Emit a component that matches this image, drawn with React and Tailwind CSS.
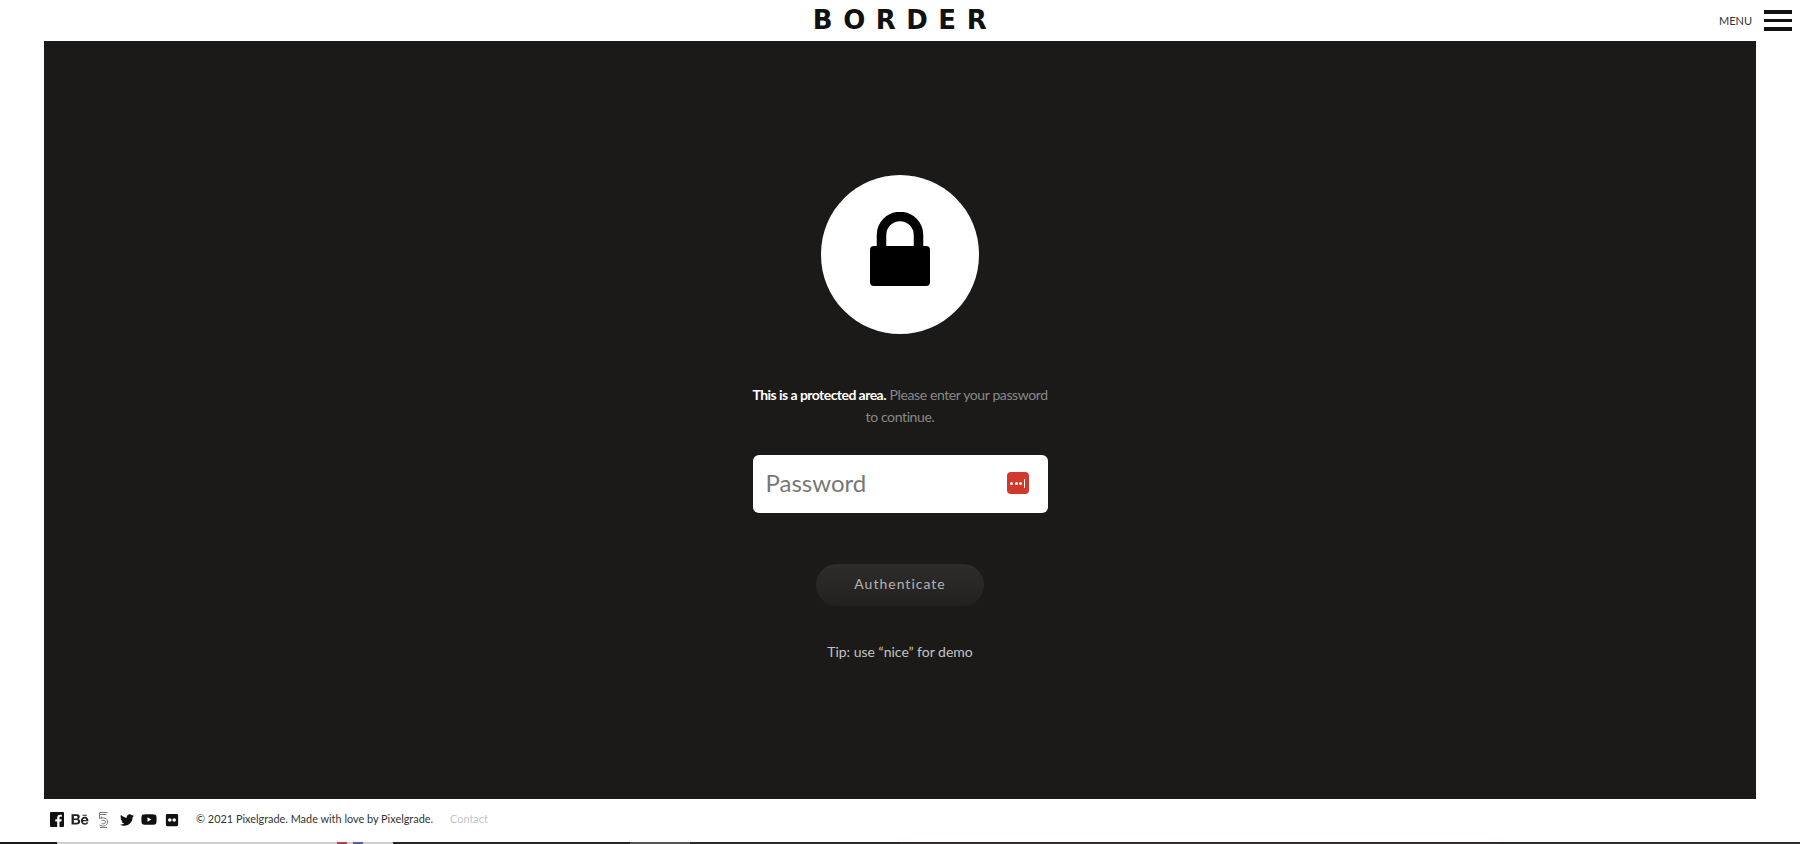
import React from "react";
import { FaBehance, FaTwitter, FaYoutube, FaFlickr } from "react-icons/fa";

const Lock = () => (
  <svg width="60" height="74" viewBox="0 0 60 74" fill="none">
    <path d="M11.5 36V23a18.5 18.5 0 0 1 37 0v13" stroke="#000" strokeWidth="9.5" />
    <rect x="0" y="34" width="60" height="40" rx="4" fill="#000" />
  </svg>
);

const KeyBadge = () => (
  <div className="absolute right-[19px] top-[17px] flex h-[22px] w-[22px] items-center justify-center gap-[1.500px] rounded-[4px] bg-[#d0392b]">
    <span className="h-[3px] w-[3px] rounded-full bg-white" />
    <span className="h-[3px] w-[3px] rounded-full bg-white" />
    <span className="h-[3px] w-[3px] rounded-full bg-white" />
    <span className="h-[9px] w-[1.500px] bg-white" />
  </div>
);

const FacebookSquare = () => (
  <svg width="14" height="15" viewBox="0 0 14 15">
    <rect width="14" height="15" rx="1" fill="#111" />
    <path d="M9.500 15V9.500h1.900l.3-2.300H9.500V5.900c0-.7.2-1.100 1.100-1.100h1.200V2.800c-.2 0-.9-.1-1.700-.1-1.700 0-2.900 1-2.900 3v1.500H5.300v2.300h1.900V15z" fill="#fff" />
  </svg>
);

// stacked "5" mark from the footer row
const FiveMark = () => (
  <svg width="13" height="18" viewBox="0 0 13 18" fill="none" stroke="#777" strokeWidth="1">
    <path d="M2.500 1.500h8M2.500 3.500h7M2.500 1.500v6" />
    <path d="M2.500 7.500c4-1.500 8-.5 8 3.500s-5 5-8 3" />
    <path d="M4.500 5.500v2M4.500 9.500c2-.8 4 0 4 1.500s-2.500 2.500-4 1.500" />
    <path d="M3 16.500h7" />
  </svg>
);

export default function App() {
  return (
    <div className="flex h-[844px] w-full flex-col overflow-hidden bg-white font-['Lato','Open_Sans',sans-serif]">
      {/* Header */}
      <header className="relative flex h-[41px] shrink-0 items-center justify-center">
        <span className="pb-[1px] pl-[10px] font-['DejaVu_Sans',sans-serif] text-[26px] font-bold leading-none tracking-[10.500px] text-[#111]">
          BORDER
        </span>
        <div className="absolute right-[8px] top-[10px] flex items-center gap-[12px]">
          <span className="text-[11px] leading-none text-[#333]">MENU</span>
          <div className="flex w-[28px] flex-col gap-[5px]">
            <span className="h-[3.500px] bg-[#111]" />
            <span className="h-[3.500px] bg-[#111]" />
            <span className="h-[3.500px] bg-[#111]" />
          </div>
        </div>
      </header>

      {/* Dark panel */}
      <main className="mx-[44px] flex h-[758px] shrink-0 flex-col items-center bg-[#1c1a18] pt-[134px]">
        <div className="flex h-[159px] w-[158px] items-center justify-center rounded-full bg-white pb-[12px]">
          <Lock />
        </div>
        <p className="mt-[50px] w-[295px] whitespace-nowrap text-center text-[14px] leading-[22px] text-[#8a8886]">
          <strong className="font-bold tracking-[-0.55px] text-white">This is a protected area.</strong>{" "}
          <span className="tracking-[-0.38px]">Please enter your password</span>
          <br />
          <span className="tracking-[-0.38px]">to continue.</span>
        </p>
        <div className="relative mt-[27px] h-[58px] w-[295px]">
          <input
            type="password"
            placeholder="Password"
            className="h-full w-full rounded-[6px] bg-white pb-[3px] pl-[13px] text-[24px] text-[#777] outline-none placeholder:text-[#777]"
          />
          <KeyBadge />
        </div>
        <button className="mt-[51px] h-[42px] w-[168px] rounded-full bg-gradient-to-b from-[#2e2d2c] to-[#222120] pb-[4px] text-[14px] tracking-[1px] text-[#b4b2b0]">
          Authenticate
        </button>
        <p className="mt-[35px] text-[14px] leading-[22px] text-[#c4c2c0]">Tip: use “nice” for demo</p>
      </main>

      {/* Footer */}
      <footer className="flex h-[43px] shrink-0 items-center pb-[2px] pl-[50px]">
        <div className="flex items-center text-[#111]">
          <FacebookSquare />
          <FaBehance className="ml-[7px] h-[15px] w-[18px] text-[#222]" />
          <div className="ml-[8px]"><FiveMark /></div>
          <FaTwitter className="ml-[10px] h-[14px] w-[14px]" />
          <FaYoutube className="ml-[7px] h-[17px] w-[16px]" />
          <FaFlickr className="ml-[8px] h-[14px] w-[14px]" />
        </div>
        <span className="ml-[17px] text-[10.900px] text-[#333]">© 2021 Pixelgrade. Made with love by Pixelgrade.</span>
        <span className="ml-[17px] text-[10.900px] text-[#c4c4c4]">Contact</span>
      </footer>

      {/* Strip of the page behind */}
      <div className="flex h-[2px] shrink-0">
        <div className="w-[57px] bg-[#1a1a1a]" />
        <div className="w-[280px] bg-[#cfcfcf]" />
        <div className="w-[10px] bg-[#b04050]" />
        <div className="w-[6px] bg-[#cfcfcf]" />
        <div className="w-[10px] bg-[#5060a0]" />
        <div className="w-[30px] bg-[#cfcfcf]" />
        <div className="w-[237px] bg-[#252525]" />
        <div className="w-[60px] bg-[#555]" />
        <div className="w-[210px] bg-[#2a2a2a]" />
        <div className="flex-1 bg-[#3a2a30]" />
        <div className="w-[300px] bg-[#2d2d2d]" />
      </div>
    </div>
  );
}
